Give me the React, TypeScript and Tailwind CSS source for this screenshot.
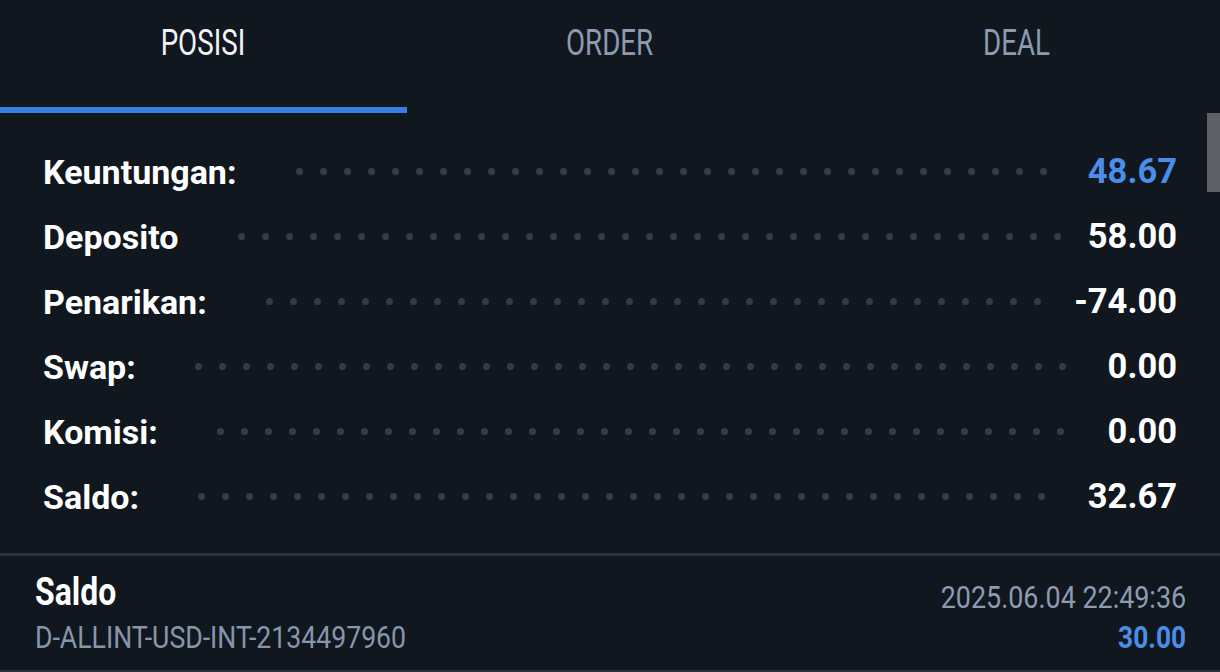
import React from 'react';

const rows: { label: string; value: string; blue?: boolean }[] = [
  { label: 'Keuntungan:', value: '48.67', blue: true },
  { label: 'Deposito', value: '58.00' },
  { label: 'Penarikan:', value: '-74.00' },
  { label: 'Swap:', value: '0.00' },
  { label: 'Komisi:', value: '0.00' },
  { label: 'Saldo:', value: '32.67' },
];

const tabs = ['POSISI', 'ORDER', 'DEAL'];

const Dots: React.FC = () => (
  <div className="ml-[59px] mr-[24px] flex h-[7px] flex-1 flex-wrap gap-x-[17px] overflow-hidden">
    {Array.from({ length: 60 }).map((_, i) => (
      <span key={i} className="h-[7px] w-[7px] shrink-0 rounded-full bg-[#363c47]" />
    ))}
  </div>
);

export default function App() {
  return (
    <div className="h-[672px] w-[1220px] overflow-hidden bg-[#10171f] font-['Roboto',sans-serif]">
      <div className="flex h-[113px]">
        {tabs.map((t, i) => (
          <div key={t} className="flex w-1/3 flex-col">
            <div className="flex flex-1 justify-center pt-[22px]">
              <span
                className={
                  'inline-block scale-x-[0.77] text-[36px] leading-[42px] ' +
                  (i === 0 ? 'text-[#f2f4f7]' : 'text-[#8d9ab0]')
                }
              >
                {t}
              </span>
            </div>
            <div className={i === 0 ? 'h-[6px] bg-[#3a7de2]' : 'h-[6px]'} />
          </div>
        ))}
      </div>

      <div className="relative border-b-[3px] border-[#2b313b] pb-[24px] pl-[43px] pr-[43px] pt-[26px]">
        <div className="absolute right-0 top-0 h-[79px] w-[13px] bg-[#5d6167]" />
        {rows.map((r) => (
          <div key={r.label} className="flex h-[65px] items-center">
            <span className="text-[34px] font-bold leading-none text-white">{r.label}</span>
            <Dots />
            <span
              className={
                'text-[34.5px] font-bold leading-none ' + (r.blue ? 'text-[#4a8ee8]' : 'text-white')
              }
            >
              {r.value}
            </span>
          </div>
        ))}
      </div>

      <div className="flex h-[116px] justify-between border-b-[2px] border-[#2b313b] pl-[35px] pr-[34px]">
        <div className="flex flex-col items-start pt-[17px]">
          <span className="inline-block origin-left scale-x-[0.84] text-[38px] font-bold leading-none text-white">
            Saldo
          </span>
          <span className="mt-[11px] inline-block origin-left scale-x-[0.86] text-[31px] leading-none text-[#8795aa]">
            D-ALLINT-USD-INT-2134497960
          </span>
        </div>
        <div className="flex flex-col items-end pt-[25px]">
          <span className="inline-block origin-right scale-x-[0.84] text-[32px] leading-none text-[#8d9ab0]">
            2025.06.04 22:49:36
          </span>
          <span className="mt-[9px] inline-block origin-right scale-x-[0.85] text-[31px] font-bold leading-none text-[#4a8ee8]">
            30.00
          </span>
        </div>
      </div>
    </div>
  );
}
